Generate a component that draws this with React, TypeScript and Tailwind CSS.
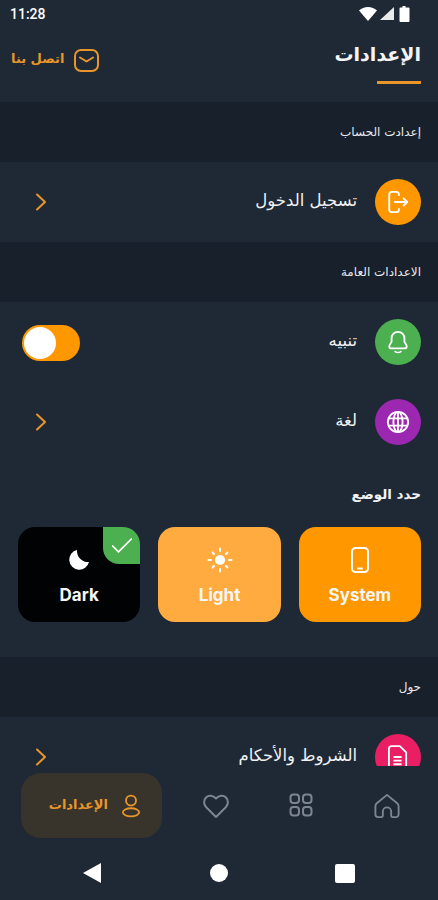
import { Check } from 'lucide-react';
import type { ReactNode } from 'react';

function SectionBand({ title }: { title: string }) {
  return (
    <div className="h-[60px] bg-[#18202b] flex items-center pr-[17px] text-[12px] text-[#e8eaed]">
      {title}
    </div>
  );
}

function Row({ color, icon, label, children }: { color: string; icon: ReactNode; label: string; children?: ReactNode }) {
  return (
    <div className="h-[80px] shrink-0 flex items-center pr-[17px] pl-[22px]">
      <div className={`w-[46px] h-[46px] rounded-full flex items-center justify-center ${color}`}>{icon}</div>
      <span className="mr-[18px] text-[16.500px] text-[#f1f2f4] -mt-[2px]">{label}</span>
      <div className="mr-auto flex items-center">{children}</div>
    </div>
  );
}

function Arrow() {
  return (
    <svg width="12" height="18" viewBox="0 0 12 18" fill="none" stroke="#e8962a" strokeWidth="2" strokeLinecap="round" strokeLinejoin="round" className="ml-[13px]">
      <path d="M2 1.500 10 9l-8 7.500" />
    </svg>
  );
}

function ModeCard({ color, label, icon, selected }: { color: string; label: string; icon: ReactNode; selected?: boolean }) {
  return (
    <div className={`relative h-[95px] flex-1 rounded-[17px] flex flex-col items-center pt-[19px] overflow-hidden ${color}`}>
      <div className="h-[28px] flex items-center justify-center">{icon}</div>
      <span dir="ltr" className="mt-[8px] text-[17px] leading-[26px] font-bold text-[#f6f6f6] font-['Inter']">{label}</span>
      {selected && (
        <div className="absolute top-0 right-0 w-[37px] h-[37px] bg-[#4caf50] rounded-bl-[16px] flex items-center justify-center">
          <Check className="w-[28px] h-[28px] text-white" strokeWidth={1.500} />
        </div>
      )}
    </div>
  );
}

export default function App() {
  return (
    <div dir="rtl" className="w-[438px] h-[900px] overflow-hidden flex flex-col bg-[#1f2935] font-['DejaVu_Sans',sans-serif]">
      {/* Status bar */}
      <div dir="ltr" className="h-[28px] shrink-0 flex items-center justify-between pl-[10px] pr-[28px] text-white">
        <span className="text-[14px] font-medium font-['Roboto']">11:28</span>
        <div className="flex items-center gap-[2px]">
          <svg width="18" height="14" viewBox="0 0 18 14" fill="#fff"><path d="M0 3.500C2.500 1.300 5.600 0 9 0s6.500 1.300 9 3.500L9 14z" /></svg>
          <svg width="15" height="14" viewBox="0 0 15 14" fill="#fff" className="opacity-90"><path d="M15 0v13H1z" /></svg>
          <svg width="11" height="16" viewBox="0 0 11 16" fill="#fff" className="ml-[3px]"><path d="M3.500 0h3v1.500H9.500A1 1 0 0 1 10.500 2.500V15a1 1 0 0 1-1 1h-8a1 1 0 0 1-1-1V2.500a1 1 0 0 1 1-1h2z" /></svg>
        </div>
      </div>

      {/* Header */}
      <div className="h-[74px] shrink-0 flex items-start justify-between pr-[17px] pl-[11px]">
        <div className="flex flex-col items-start pt-[10px]">
          <span className="text-[19px] leading-[32px] font-bold text-[#f3f4f6]">الإعدادات</span>
          <div className="w-[44px] h-[3px] mt-[11px] bg-[#e8962a]" />
        </div>
        <div className="flex items-center gap-[10px] pt-[21px]">
          <svg width="25" height="23" viewBox="0 0 25 23" fill="none" stroke="#e8962a" strokeWidth="2">
            <rect x="1" y="1" width="23" height="21" rx="6" />
            <path d="M6 8.500 12.500 12.500 19 8.500" strokeLinecap="round" strokeLinejoin="round" />
          </svg>
          <span className="text-[13px] font-bold text-[#e8962a] -mt-[4px]">اتصل بنا</span>
        </div>
      </div>

      {/* Scroll area */}
      <div className="flex-1 min-h-0 overflow-hidden">
        <SectionBand title="إعدادت الحساب" />
        <Row
          color="bg-[#ff9800]"
          label="تسجيل الدخول"
          icon={
            <svg width="24" height="24" viewBox="0 0 26 26" fill="none" stroke="#fff" strokeWidth="2" strokeLinecap="round" strokeLinejoin="round">
              <path d="M14 5.500V5a3 3 0 0 0-3-3H6.500a3 3 0 0 0-3 3v16a3 3 0 0 0 3 3H11a3 3 0 0 0 3-3v-.5" />
              <path d="M9.500 13H23M19 9l4 4-4 4" />
            </svg>
          }
        >
          <Arrow />
        </Row>
        <SectionBand title="الاعدادات العامة" />
        <Row
          color="bg-[#4caf50]"
          label="تنبيه"
          icon={
            <svg width="22" height="24" viewBox="0 0 24 26" fill="none" stroke="#fff" strokeWidth="2" strokeLinecap="round" strokeLinejoin="round">
              <path d="M12 2c-4.500 0-7 3.500-7 7v3.500c0 1.500-2.500 3-2.500 5 0 1.500 1 2.500 2.500 2.500h14c1.500 0 2.500-1 2.500-2.500 0-2-2.500-3.500-2.500-5V9c0-3.500-2.500-7-7-7z" />
              <path d="M9 23.500c1.500 1.200 4.500 1.200 6 0" />
            </svg>
          }
        >
          <div dir="ltr" className="w-[58px] h-[36px] mt-[2px] rounded-full bg-[#ff9800] flex items-center pl-[2px]">
            <div className="w-[32px] h-[32px] rounded-full bg-white" />
          </div>
        </Row>
        <Row
          color="bg-[#9c27b0]"
          label="لغة"
          icon={
            <svg width="24" height="24" viewBox="0 0 26 26" fill="none" stroke="#fff" strokeWidth="2">
              <circle cx="13" cy="13" r="11" />
              <ellipse cx="13" cy="13" rx="5" ry="11" />
              <path d="M13 2v22M3 9h20M3 17h20" />
            </svg>
          }
        >
          <Arrow />
        </Row>

        <div className="h-[65px] flex items-center pr-[17px] text-[13.500px] font-bold text-[#f1f2f4]">حدد الوضع</div>

        <div className="flex gap-[18px] pr-[17px] pl-[18px]">
          <ModeCard
            color="bg-[#ff9800]"
            label="System"
            icon={
              <svg width="18" height="26" viewBox="0 0 18 26" fill="none" stroke="#fff" strokeWidth="2">
                <rect x="1" y="1" width="16" height="24" rx="3.500" />
                <path d="M7 21.500h4" strokeLinecap="round" />
              </svg>
            }
          />
          <ModeCard
            color="bg-[#ffab40]"
            label="Light"
            icon={
              <svg width="26" height="26" viewBox="0 0 26 26" fill="none" stroke="#fff" strokeWidth="2" strokeLinecap="round">
                <circle cx="13" cy="13" r="5" fill="#fff" stroke="none" />
                <path d="M13 1.500v2.500M13 22v2.500M1.500 13H4M22 13h2.500M5.500 5.500l1.500 1.500M19 19l1.500 1.500M20.500 5.500 19 7M7 19l-1.500 1.500" />
              </svg>
            }
          />
          <ModeCard
            color="bg-[#010203]"
            label="Dark"
            selected
            icon={
              <svg width="22" height="22" viewBox="0 0 22 22" fill="#fff">
                <path d="M9 1A10 10 0 1 0 21 13 11 11 0 0 1 9 1z" />
              </svg>
            }
          />
        </div>

        <div className="h-[35px]" />
        <SectionBand title="حول" />
        <Row
          color="bg-[#e91e63]"
          label="الشروط والأحكام"
          icon={
            <svg width="20" height="24" viewBox="0 0 22 26" fill="none" stroke="#fff" strokeWidth="2" strokeLinejoin="round">
              <path d="M4 1h9l7 7v14a3 3 0 0 1-3 3H4a3 3 0 0 1-3-3V4a3 3 0 0 1 3-3z" />
              <path d="M6 13h9M6 17h9M6 21h9" />
            </svg>
          }
        >
          <Arrow />
        </Row>
      </div>

      {/* Bottom nav */}
      <div className="h-[84px] shrink-0 flex items-start pt-[7px] pr-[38px] pl-[21px] bg-[#1f2935]">
        <svg width="26" height="26" viewBox="0 0 28 28" fill="none" stroke="#7d8590" strokeWidth="2" strokeLinejoin="round" className="mt-[20px]">
          <path d="M14 2 3 11c-1 1-1.500 2-1.500 3.500V23a3 3 0 0 0 3 3H8a1.500 1.500 0 0 0 1.500-1.500V20a4.500 4.500 0 0 1 9 0v4.500A1.500 1.500 0 0 0 20 26h3.500a3 3 0 0 0 3-3v-8.500c0-1.500-.5-2.500-1.500-3.500z" />
        </svg>
        <svg width="24" height="24" viewBox="0 0 24 24" fill="none" stroke="#7d8590" strokeWidth="2" className="mr-[61px] mt-[20px]">
          <rect x="1.500" y="1.500" width="8.500" height="8.500" rx="3" />
          <rect x="14" y="1.500" width="8.500" height="8.500" rx="3" />
          <rect x="1.500" y="14" width="8.500" height="8.500" rx="3" />
          <rect x="14" y="14" width="8.500" height="8.500" rx="3" />
        </svg>
        <svg width="26" height="24" viewBox="0 0 26 24" fill="none" stroke="#7d8590" strokeWidth="2" strokeLinejoin="round" className="mr-[60px] mt-[21px]">
          <path d="M13 23 3 13C.500 10.500.500 6 3 3.500 5.500 1 10 1 13 4.500 16 1 20.500 1 23 3.500c2.500 2.500 2.500 7 0 9.500z" />
        </svg>
        <div className="mr-auto w-[141px] h-[65px] rounded-[20px] bg-[#38342c] flex items-center pr-[21px] gap-[13px]">
          <svg width="20" height="24" viewBox="0 0 22 26" fill="none" stroke="#e8962a" strokeWidth="2">
            <circle cx="11" cy="7" r="5.500" />
            <ellipse cx="11" cy="20" rx="9" ry="4.500" />
          </svg>
          <span className="text-[13px] font-bold text-[#e8962a] -mt-[2px]">الإعدادات</span>
        </div>
      </div>

      {/* Android nav */}
      <div dir="ltr" className="h-[50px] shrink-0 flex items-center pl-[83px] -translate-y-[2px]">
        <svg width="18" height="20" viewBox="0 0 18 20" fill="#fff"><path d="M18 0v20L0 10z" /></svg>
        <div className="w-[18px] h-[18px] rounded-full bg-white ml-[109px]" />
        <div className="w-[20px] h-[19px] rounded-[2px] bg-white ml-[107px]" />
      </div>
    </div>
  );
}
